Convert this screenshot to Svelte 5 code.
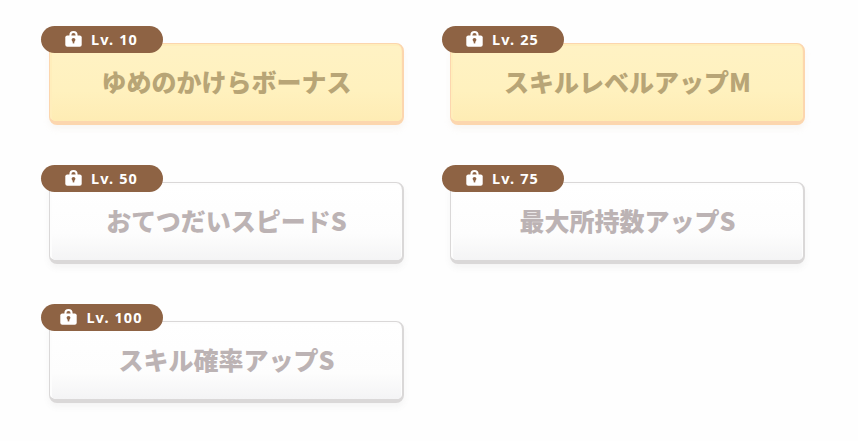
<script>
  const items = [
    { lv: 'Lv. 10', name: 'ゆめのかけらボーナス', gold: true },
    { lv: 'Lv. 25', name: 'スキルレベルアップM', gold: true },
    { lv: 'Lv. 50', name: 'おてつだいスピードS', gold: false },
    { lv: 'Lv. 75', name: '最大所持数アップS', gold: false },
    { lv: 'Lv. 100', name: 'スキル確率アップS', gold: false }
  ];
</script>

<main class="page">
  {#each items as item}
    <div class="card" class:gold={item.gold}>
      <div class="badge">
        <svg class="lock" viewBox="0 0 17 16" aria-hidden="true">
          <path d="M5.4 6V4.2a3.1 3.1 0 0 1 6.2 0V6" fill="none" stroke="#fff" stroke-width="2" />
          <rect x="0.3" y="4.4" width="16.4" height="11.4" rx="2" fill="#fff" />
          <circle cx="8.5" cy="8.8" r="1.9" fill="#8e6344" />
          <rect x="7.7" y="9" width="1.6" height="3.4" fill="#8e6344" />
        </svg>
        <span>{item.lv}</span>
      </div>
      <div class="inner">{item.name}</div>
    </div>
  {/each}
</main>

<style>
  :global(body) {
    margin: 0;
    background: #fefefe;
  }
  .page {
    display: grid;
    grid-template-columns: 355px 355px;
    column-gap: 46px;
    row-gap: 57px;
    padding: 43px 0 0 49px;
    width: 858px;
    height: 441px;
    box-sizing: border-box;
    align-content: start;
    font-family: "Noto Sans CJK JP", "Noto Sans", sans-serif;
  }
  .card {
    position: relative;
    height: 82px;
    box-sizing: border-box;
    border-radius: 8px;
    border: 1.5px solid #dad8d8;
    border-bottom-width: 4px;
    border-right-width: 2.5px;
    background: #fdfdfd;
    box-shadow: 0 4px 6px rgba(120, 120, 120, 0.07);
    display: flex;
  }
  .card.gold {
    border-color: #fcd6ae;
    background: #ffeebb;
    box-shadow: 0 4px 6px rgba(210, 200, 180, 0.14);
  }
  .inner {
    flex: 1;
    margin: 2px 1px 0 2px;
    border-radius: 4px;
    background: linear-gradient(180deg, #ffffff 0%, #fdfdfd 65%, #f4f4f5 100%);
    color: #bcb3b4;
    font-weight: 900;
    font-size: 25px;
    display: flex;
    align-items: center;
    justify-content: center;
    padding-bottom: 5px;
    box-sizing: border-box;
  }
  .gold .inner {
    background: linear-gradient(180deg, #fff2c4 0%, #fff1be 60%, #feecb4 100%);
    color: #b8a576;
  }
  .badge {
    position: absolute;
    left: -9.5px;
    top: -18.5px;
    width: 122px;
    height: 27px;
    border-radius: 14px;
    background: #8e6344;
    color: #fff;
    display: flex;
    align-items: center;
    justify-content: center;
    gap: 9px;
    font-family: "Noto Sans", sans-serif;
    font-weight: 700;
    font-size: 14.5px;
    letter-spacing: 1.1px;
  }
  .lock {
    width: 17px;
    height: 16px;
  }
</style>
